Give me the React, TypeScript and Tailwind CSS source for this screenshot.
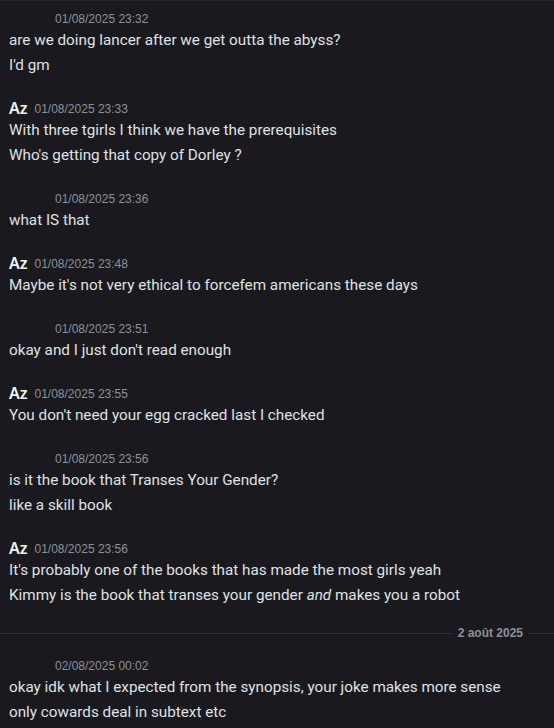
import React from 'react';

type Group = {
  name?: string;
  time: string;
  lines: React.ReactNode[];
};

const groups: Group[] = [
  {
    time: '01/08/2025 23:32',
    lines: ['are we doing lancer after we get outta the abyss?', "I'd gm"],
  },
  {
    name: 'Az',
    time: '01/08/2025 23:33',
    lines: ['With three tgirls I think we have the prerequisites', "Who's getting that copy of Dorley ?"],
  },
  { time: '01/08/2025 23:36', lines: ['what IS that'] },
  {
    name: 'Az',
    time: '01/08/2025 23:48',
    lines: ["Maybe it's not very ethical to forcefem americans these days"],
  },
  { time: '01/08/2025 23:51', lines: ["okay and I just don't read enough"] },
  {
    name: 'Az',
    time: '01/08/2025 23:55',
    lines: ["You don't need your egg cracked last I checked"],
  },
  {
    time: '01/08/2025 23:56',
    lines: ['is it the book that Transes Your Gender?', 'like a skill book'],
  },
  {
    name: 'Az',
    time: '01/08/2025 23:56',
    lines: [
      "It's probably one of the books that has made the most girls yeah",
      <>
        Kimmy is the book that transes your gender <em>and</em> makes you a robot
      </>,
    ],
  },
];

const lastGroup: Group = {
  time: '02/08/2025 00:02',
  lines: ['okay idk what I expected from the synopsis, your joke makes more sense', 'only cowards deal in subtext etc'],
};

function MessageGroup({ group }: { group: Group }) {
  return (
    <div>
      <div className="flex items-end h-[20px] gap-[7px]">
        {group.name ? (
          <span className="text-[16px] font-semibold text-[#f2f3f5] leading-[20px] font-['Noto_Sans',sans-serif]">
            {group.name}
          </span>
        ) : (
          <span className="w-[39px]" />
        )}
        <span className="text-[12px] text-[#8c9099] leading-[18px] font-['Liberation_Sans',sans-serif]">
          {group.time}
        </span>
      </div>
      {group.lines.map((line, i) => (
        <div key={i} className="h-[25px] leading-[25px] text-[15.25px] text-[#dfe1e5] whitespace-nowrap">
          {line}
        </div>
      ))}
    </div>
  );
}

export default function App() {
  return (
    <div className="w-[554px] h-[728px] overflow-hidden bg-[#1a1a1e] border-t border-[#25252a] font-['Roboto',sans-serif]">
      <div className="pl-[9px] pt-[7px] flex flex-col gap-[20px]">
        {groups.map((g, i) => (
          <MessageGroup key={i} group={g} />
        ))}
      </div>
      <div className="flex items-center h-[16px] mt-[17px] mb-[14px]">
        <div className="flex-1 h-px bg-[#2c2c31]" />
        <span className="px-[5px] text-[12px] leading-[16px] font-bold text-[#8c9099] font-['Liberation_Sans',sans-serif]">
          2 août 2025
        </span>
        <div className="w-[26px] h-px bg-[#2c2c31]" />
      </div>
      <div className="pl-[9px]">
        <MessageGroup group={lastGroup} />
      </div>
    </div>
  );
}
